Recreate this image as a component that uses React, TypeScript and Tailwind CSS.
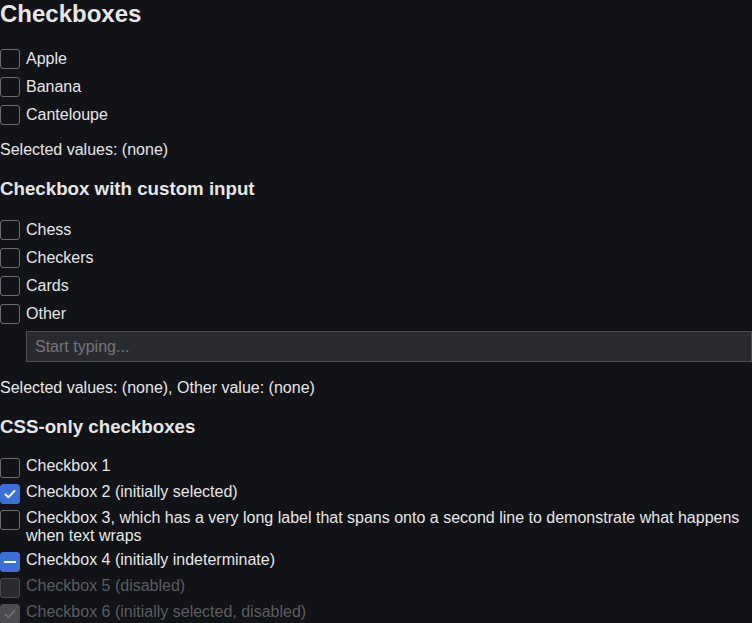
import React, { useState } from "react";

type BoxState = "off" | "on" | "mixed";

const Box = ({ state = "off", disabled = false }: { state?: BoxState; disabled?: boolean }) => {
  let cls = "border-[#6a6d72] bg-transparent";
  if (state !== "off") cls = "border-[#3b6fd9] bg-[#3b6fd9]";
  if (disabled) cls = state === "off" ? "border-[#4a4c50] bg-[#2a2b2e]" : "border-[#4a4c50] bg-[#4a4c50]";
  return (
    <span className={`flex h-5 w-5 shrink-0 items-center justify-center rounded-[3px] border ${cls}`}>
      {state === "on" && (
        <svg viewBox="0 0 20 20" className="h-5 w-5" fill="none">
          <path
            d="M5 10.5l3.2 3.2L15 6.5"
            stroke={disabled ? "#6b6d71" : "#ffffff"}
            strokeWidth="2.2"
            strokeLinecap="round"
            strokeLinejoin="round"
          />
        </svg>
      )}
      {state === "mixed" && <span className="h-[2px] w-3 bg-white" />}
    </span>
  );
};

const Row = ({ label, checked, onToggle }: { label: string; checked: boolean; onToggle: () => void }) => (
  <label className="mb-2 flex h-5 cursor-pointer items-center gap-[6px]" onClick={onToggle}>
    <Box state={checked ? "on" : "off"} />
    <span className="leading-5">{label}</span>
  </label>
);

const CssRow = ({ label, state = "off", disabled = false }: { label: string; state?: BoxState; disabled?: boolean }) => (
  <div className={`mb-[6px] flex items-start gap-[6px] ${disabled ? "text-[#5b5d61]" : ""}`}>
    <span className="relative top-px">
      <Box state={state} disabled={disabled} />
    </span>
    <span className="leading-[18px]">{label}</span>
  </div>
);

export default function App() {
  const [fruits, setFruits] = useState<string[]>([]);
  const [games, setGames] = useState<string[]>([]);
  const [other, setOther] = useState("");

  const toggle = (list: string[], set: (v: string[]) => void, v: string) =>
    set(list.includes(v) ? list.filter((x) => x !== v) : [...list, v]);

  return (
    <div className="min-h-screen overflow-hidden bg-[#111317] text-[16px] text-[#e6e6e7] font-['Liberation_Sans',Arial,sans-serif]">
      <h2 className="text-[24px] font-bold leading-[28px]">Checkboxes</h2>
      <div className="mt-[21px]">
        {["Apple", "Banana", "Canteloupe"].map((f) => (
          <Row key={f} label={f} checked={fruits.includes(f)} onToggle={() => toggle(fruits, setFruits, f)} />
        ))}
      </div>
      <p className="mt-4 leading-[18px]">Selected values: {fruits.length ? fruits.join(", ") : "(none)"}</p>

      <h3 className="mt-[19px] text-[18.72px] font-bold leading-[22px]">Checkbox with custom input</h3>
      <div className="mt-5">
        {["Chess", "Checkers", "Cards", "Other"].map((g) => (
          <Row key={g} label={g} checked={games.includes(g)} onToggle={() => toggle(games, setGames, g)} />
        ))}
      </div>
      <div className="-mt-px pl-[26px]">
        <input
          value={other}
          onChange={(e) => setOther(e.target.value)}
          placeholder="Start typing..."
          className="h-[31px] w-full border border-[#4c4e53] bg-[#2a2b2f] px-2 text-[16px] text-[#e6e6e7] outline-none placeholder:text-[#74767b]"
        />
      </div>
      <p className="mt-[17px] leading-[18px]">
        Selected values: {games.length ? games.join(", ") : "(none)"}, Other value: {other || "(none)"}
      </p>

      <h3 className="mt-[19px] text-[18.72px] font-bold leading-[22px]">CSS-only checkboxes</h3>
      <div className="mt-[19px]">
        <CssRow label="Checkbox 1" />
        <CssRow label="Checkbox 2 (initially selected)" state="on" />
        <CssRow label="Checkbox 3, which has a very long label that spans onto a second line to demonstrate what happens when text wraps" />
        <CssRow label="Checkbox 4 (initially indeterminate)" state="mixed" />
        <CssRow label="Checkbox 5 (disabled)" disabled />
        <CssRow label="Checkbox 6 (initially selected, disabled)" state="on" disabled />
      </div>
    </div>
  );
}
